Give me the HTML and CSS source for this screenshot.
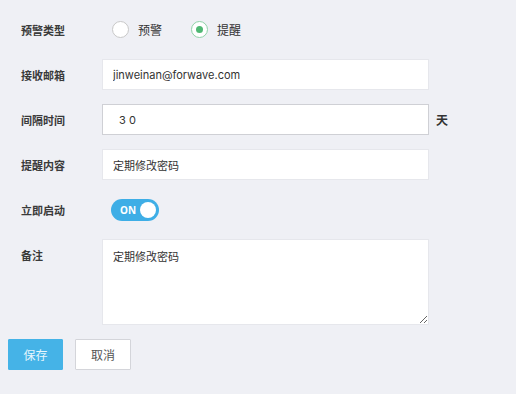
FILE: index.html
```html
<!doctype html>
<html lang="zh-CN">
<head>
  <meta charset="UTF-8" />
  <title>预警设置</title>
  <link rel="stylesheet" href="styles.css">
</head>
<body>
  <form class="alert-form">
    <div class="row">
      <label class="label">预警类型</label>
      <div class="radios">
        <label class="radio"><span class="dot"></span>预警</label>
        <label class="radio checked"><span class="dot"></span>提醒</label>
      </div>
    </div>
    <div class="row">
      <label class="label">接收邮箱</label>
      <input class="field" type="text" value="jinweinan@forwave.com">
    </div>
    <div class="row">
      <label class="label">间隔时间</label>
      <input class="field field-num" type="text" value="3 0">
      <span class="unit">天</span>
    </div>
    <div class="row">
      <label class="label">提醒内容</label>
      <input class="field" type="text" value="定期修改密码">
    </div>
    <div class="row">
      <label class="label">立即启动</label>
      <span class="switch"><span class="switch-text">ON</span><span class="knob"></span></span>
    </div>
    <div class="row row-top">
      <label class="label">备注</label>
      <textarea class="field area">定期修改密码</textarea>
    </div>
    <div class="actions">
      <button type="button" class="btn btn-primary">保存</button>
      <button type="button" class="btn">取消</button>
    </div>
  </form>
</body>
</html>
```

FILE: styles.css
```css
* { box-sizing: border-box; }
html, body { height: 100%; }
body {
  margin: 0;
  background: #eff0f5;
  color: #333;
  font-family: "Noto Sans", "Noto Sans CJK SC", sans-serif;
  font-size: 12px;
}
.alert-form {
  display: flex;
  flex-direction: column;
  gap: 14px;
  padding: 14px 0 0 0;
}
.row { display: flex; align-items: center; min-height: 31px; padding-left: 21px; }
.row-top { align-items: flex-start; }
.row-top .label { padding-top: 8px; }
.label {
  width: 81px;
  flex: none;
  font-size: 11px;
  font-weight: bold;
  color: #3a3a3a;
}
.radios { display: flex; gap: 29px; padding-left: 10px; }
.radio { display: flex; align-items: center; gap: 9px; color: #333; }
.radio .dot {
  width: 17px; height: 17px;
  border: 1px solid #c8c8c8;
  border-radius: 50%;
  background: #fff;
  display: flex; align-items: center; justify-content: center;
}
.radio.checked .dot { border-color: #8fd3a8; }
.radio.checked .dot::after {
  content: "";
  width: 7px; height: 7px;
  border-radius: 50%;
  background: #4fb873;
}
.field {
  width: 327px;
  height: 31px;
  border: 1px solid #e6e7ec;
  background: #fff;
  padding: 0 10px;
  font-family: Inter, "Noto Sans CJK SC", sans-serif;
  font-size: 11px;
  color: #333;
  outline: none;
}
.field-num { border-color: #cfd0d5; padding-left: 16px; }
.unit { margin-left: 7px; font-weight: bold; }
.area { height: 86px; padding: 8px 10px; resize: both; }
.switch {
  margin-left: 9px;
  width: 48px; height: 22px;
  border-radius: 11px;
  background: #3eaee6;
  display: flex; align-items: center; justify-content: space-between;
  padding: 0 3px 0 9px;
}
.switch-text { color: #fff; font-weight: bold; font-size: 10px; }
.knob { width: 16px; height: 16px; border-radius: 50%; background: #fff; }
.actions { display: flex; gap: 12px; padding-left: 8px; }
.btn {
  width: 56px; height: 31px;
  border: 1px solid #d4d5da;
  background: #fff;
  color: #555;
  font: inherit;
  border-radius: 1px;
}
.btn-primary { width: 55px; background: #45b3e7; border-color: #45b3e7; color: #e6f6fd; }
```
